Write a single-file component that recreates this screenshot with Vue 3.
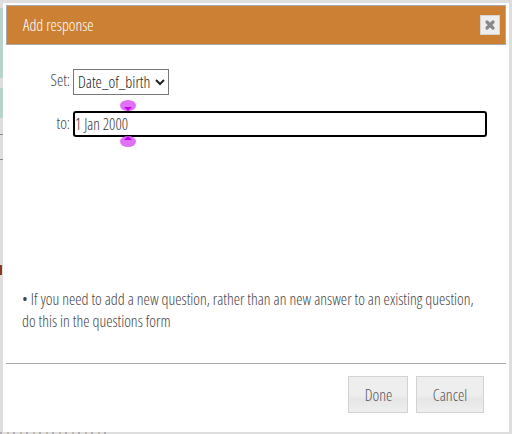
<script setup>
const options = ['Date_of_birth']
</script>

<template>
  <div class="page">
    <i class="strip s1"></i><i class="strip s2"></i><i class="tick t1"></i><i class="tick t2"></i><i class="tick t3"></i><i class="crumbs"></i>
    <section class="dialog">
      <header class="head">
        <span class="title">Add response</span>
        <button class="close" aria-label="Close">
          <svg width="12" height="12" viewBox="0 0 12 12"><path d="M3 3l6 6M9 3l-6 6" stroke="#888" stroke-width="3.2" stroke-linecap="round"/></svg>
        </button>
      </header>
      <div class="body">
        <div class="form">
          <label class="lab set">Set:</label>
          <select class="sel"><option v-for="o in options" :key="o">{{ o }}</option></select>
          <label class="lab to">to:</label>
          <div class="field">
            <i class="handle top"></i>
            <input class="inp" value="1 Jan 2000" />
            <i class="handle bot"></i>
          </div>
        </div>
        <p class="note">• If you need to add a new question, rather than an new answer to an existing question, do this in the questions form</p>
      </div>
      <footer class="foot">
        <button class="btn done">Done</button>
        <button class="btn cancel">Cancel</button>
      </footer>
    </section>
  </div>
</template>

<style>
html, body { margin: 0; background: #ddd; }
</style>

<style scoped>
.page { position: relative; width: 512px; height: 434px; box-sizing: border-box; padding: 3px 3px 2px; overflow: hidden; background: #dedede; font-family: "Open Sans", sans-serif; font-stretch: 75%; font-weight: 300; color: #333; }
.strip { position: absolute; left: 0; width: 3px; background: #b9d3cb; }
.s1 { top: 8px; height: 70px; }
.s2 { top: 88px; height: 30px; }
.tick { position: absolute; left: 0; width: 3px; height: 1px; background: #888; }
.t1 { top: 134px; } .t2 { top: 159px; }
.t3 { top: 265px; width: 2px; height: 10px; background: #8a3a20; }
.crumbs { position: absolute; left: 0; bottom: 0; width: 108px; height: 2px; background: repeating-linear-gradient(90deg, #b5adb2 0 2px, #dedede 2px 7px, #c4b8a6 7px 9px, #dedede 9px 13px); }
.dialog { height: 429px; width: 506px; box-sizing: border-box; background: #fff; padding: 2px 3px 0; display: flex; flex-direction: column; }
.head { height: 40px; box-sizing: border-box; background: #cc8033; border: 1px solid #aaa; display: flex; align-items: center; justify-content: space-between; padding: 0 5px 0 16px; flex: none; }
.title { color: #fff; font-size: 15.8px; }
.close { width: 20px; height: 20px; padding: 0; background: #eee; border: 1px solid #d3d3d3; display: flex; align-items: center; justify-content: center; }
.body { flex: 1; display: flex; flex-direction: column; }
.form { display: grid; grid-template-columns: 64px auto; column-gap: 3px; row-gap: 16px; margin-top: 24px; justify-items: start; align-items: start; }
.lab { justify-self: end; font-size: 16px; line-height: 20px; color: #444; }
.lab.set { margin-top: 1px; }
.lab.to { margin-top: 2px; }
.sel { width: 96px; height: 26px; box-sizing: border-box; border: 1px solid #767676; background: #fff; font: inherit; font-size: 16px; font-stretch: 75%; color: #222; padding: 0; }
.field { position: relative; }
.inp { display: block; width: 414px; height: 26px; box-sizing: border-box; border: 2px solid #000; border-radius: 3px; outline: none; padding: 0; font: inherit; font-size: 15.5px; font-stretch: 75%; color: #333; background: #fff; }
.handle { position: absolute; left: 47px; width: 16px; height: 11px; border-radius: 50%; background: #e070f8; }
.handle::after { content: ""; position: absolute; left: 4px; border-left: 4px solid transparent; border-right: 4px solid transparent; }
.handle.top { top: -11px; }
.handle.top::after { bottom: 0; border-top: 4px solid #c000e8; }
.handle.bot { bottom: -10px; }
.handle.bot::after { top: 0; border-bottom: 4px solid #c000e8; }
.note { margin: auto 0 0; padding: 0 28px 31px 16px; font-size: 15.9px; line-height: 22px; color: #444; }
.foot { flex: none; height: 69px; border-top: 1px solid #aaa; box-sizing: border-box; display: flex; justify-content: flex-end; align-items: flex-start; gap: 8px; padding: 12px 22px 0 0; }
.btn { height: 37px; box-sizing: border-box; border: 1px solid #d3d3d3; background: linear-gradient(#eee 0 50%, #e6e6e6 65%, #efefef); font: inherit; font-size: 16px; font-stretch: 75%; color: #555; padding: 0; }
.done { width: 60px; padding-left: 1px; }
.cancel { width: 68px; }
</style>
